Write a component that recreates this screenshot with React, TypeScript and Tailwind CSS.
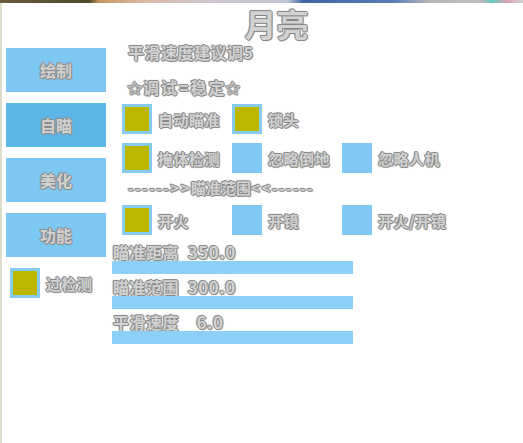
import React from "react";

const txt =
  "text-[#d2d2d2] font-bold [font-family:'Noto_Sans_CJK_SC','Noto_Sans',sans-serif] [text-shadow:1px_0_0_#8a8a8a,-1px_0_0_#8a8a8a,0_1px_0_#8a8a8a,0_-1px_0_#8a8a8a,1px_1px_1px_#999,-1px_-1px_1px_#999]";

function Box({ on }: { on: boolean }) {
  return on ? (
    <div className="w-[30px] h-[30px] shrink-0 bg-[#bcb600] border-[3px] border-[#86ccf2]" />
  ) : (
    <div className="w-[30px] h-[30px] shrink-0 bg-[#7ec8f2]" />
  );
}

function Check({ on, label }: { on: boolean; label: string }) {
  return (
    <div className="flex items-center gap-[6px]">
      <Box on={on} />
      <span className={`${txt} text-[15px] leading-none whitespace-nowrap tracking-[0.5px]`}>{label}</span>
    </div>
  );
}

function NavBtn({ label, active }: { label: string; active?: boolean }) {
  return (
    <div
      className={`w-[100px] h-[44px] flex items-center justify-center ${
        active ? "bg-[#5cb6e7]" : "bg-[#7cc8f2]"
      }`}
    >
      <span className={`${txt} text-[16px] leading-none`}>{label}</span>
    </div>
  );
}

function Slider({ label, value, mt }: { label: string; value: string; mt: string }) {
  return (
    <div className={`flex flex-col ${mt}`}>
      <div className="h-[20px] flex items-center pl-[1px]">
        <span className={`${txt} text-[16px] leading-none whitespace-pre tracking-[0.5px]`}>
          {label}
          <span className="text-[17px] tracking-[0.5px]">
            {"  "}
            {value}
          </span>
        </span>
      </div>
      <div className="w-[241px] h-[13px] bg-[#8bd0f6]" />
    </div>
  );
}

export default function App() {
  return (
    <div className="w-[523px] h-[443px] bg-white overflow-hidden flex flex-col">
      <div className="h-[3px] w-full shrink-0 bg-[linear-gradient(90deg,#6a5a3a_0%,#4f4a2a_17%,#c8955f_19%,#d9b8a0_27%,#cfc6d0_40%,#bfc3d4_55%,#3f64a6_58%,#5a7cb8_75%,#b8b4b8_82%,#c0bcc0_92%,#5fc9c0_94%,#e0a0b8_97%,#d0d0d0_100%)]" />
      <div className="flex flex-1">
        <div className="w-[2px] bg-[#dcdcc8] shrink-0" />
        <div className="flex flex-col flex-1">
          <div className="h-[40px] flex items-center justify-center pl-[28px]">
            <span className={`${txt} text-[32px] leading-none [text-shadow:1px_0_0_#888,-1px_0_0_#888,0_1px_0_#888,0_-1px_0_#888,1px_1px_1px_#999,-1px_-1px_1px_#999]`}>
              月亮
            </span>
          </div>
          <div className="flex">
            <div className="flex flex-col gap-[11px] pl-[4px] pt-[5px] w-[110px] shrink-0">
              <NavBtn label="绘制" />
              <NavBtn label="自瞄" active />
              <NavBtn label="美化" />
              <NavBtn label="功能" />
              <div className="pl-[4px]">
                <Check on label="过检测" />
              </div>
            </div>
            <div className="flex flex-col">
              <div className="h-[20px] flex items-center pl-[16px] -mt-[1px]">
                <span className={`${txt} text-[16px] leading-none tracking-[0.5px]`}>平滑速度建议调5</span>
              </div>
              <div className="h-[20px] flex items-center pl-[16px] mt-[15px]">
                <span className={`${txt} text-[16px] leading-none tracking-[2px]`}>✩调试=稳定✩</span>
              </div>
              <div className="grid grid-cols-[110px_110px_110px] pl-[10px] mt-[7px] h-[30px]">
                <Check on label="自动瞄准" />
                <Check on label="锁头" />
              </div>
              <div className="grid grid-cols-[110px_110px_110px] pl-[10px] mt-[9px] h-[30px]">
                <Check on label="掩体检测" />
                <Check on={false} label="忽略倒地" />
                <Check on={false} label="忽略人机" />
              </div>
              <div className="h-[20px] flex items-center pl-[16px] mt-[4px]">
                <span className={`${txt} text-[15px] leading-none`}>
                  <span className="tracking-[1.5px]">------&gt;&gt;</span>
                  瞄准范围
                  <span className="tracking-[1.5px]">&lt;&lt;------</span>
                </span>
              </div>
              <div className="grid grid-cols-[110px_110px_110px] pl-[10px] mt-[8px] h-[30px]">
                <Check on label="开火" />
                <Check on={false} label="开镜" />
                <Check on={false} label="开火/开镜" />
              </div>
              <Slider label="瞄准距离" value="350.0" mt="mt-[6px]" />
              <Slider label="瞄准范围" value="300.0" mt="mt-[2px]" />
              <Slider label="平滑速度" value="  6.0" mt="mt-[2px]" />
            </div>
          </div>
        </div>
      </div>
    </div>
  );
}
